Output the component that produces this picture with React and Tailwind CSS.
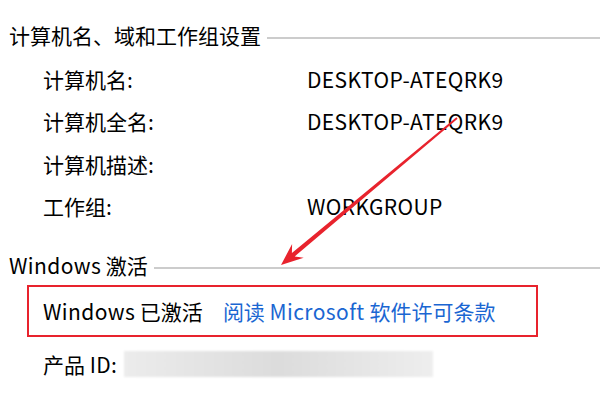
const FONT = { fontFamily: '"Noto Sans CJK SC", "Noto Sans", sans-serif' };

const FIELDS = [
  { label: "计算机名:", value: "DESKTOP-ATEQRK9" },
  { label: "计算机全名:", value: "DESKTOP-ATEQRK9" },
  { label: "计算机描述:", value: "" },
  { label: "工作组:", value: "WORKGROUP" },
];

// Latin runs are set a little wider, closer to Segoe UI
function Latin({ children }) {
  return <span className="tracking-[0.4px]">{children}</span>;
}

function GroupHeading({ children }) {
  return (
    <div className="flex h-[30px] items-center">
      <span className="shrink-0 pl-[9px] pr-[6px] leading-none">{children}</span>
      <div className="mt-[6px] h-[2px] flex-1 bg-[#cccccc]" />
    </div>
  );
}

function Arrow() {
  return (
    <svg className="pointer-events-none absolute left-0 top-0" width="600" height="400" viewBox="0 0 600 400" aria-hidden>
      <polygon
        fill="#e8232d"
        points="457.6,118.7 294.7,256.4 303.7,257.8 281,265 292.1,244 291.9,253 456.4,117.3"
      />
    </svg>
  );
}

export default function App() {
  return (
    <div className="relative h-[400px] w-[600px] overflow-hidden bg-white text-[21px] text-black" style={FONT}>
      <div className="flex flex-col pt-[20px]">
        <GroupHeading>计算机名、域和工作组设置</GroupHeading>

        <div className="mt-[8px] flex flex-col">
          {FIELDS.map((f) => (
            <div key={f.label} className="flex h-[42.5px] items-center leading-none">
              <span className="w-[307px] shrink-0 pl-[43px]">{f.label}</span>
              <Latin>{f.value}</Latin>
            </div>
          ))}
        </div>

        <div className="mt-[22px]">
          <GroupHeading>
            <Latin>Windows</Latin> 激活
          </GroupHeading>
        </div>

        <div className="ml-[27px] mt-[5px] flex h-[52px] w-[511px] items-center border-2 border-[#e8232d] pl-[14px] leading-none">
          <span>
            <Latin>Windows</Latin> 已激活
          </span>
          <a className="ml-[20px] text-[#1a66d2]">
            阅读 <Latin>Microsoft</Latin> 软件许可条款
          </a>
        </div>

        <div className="mt-[12px] flex h-[30px] items-center leading-none">
          <span className="shrink-0 pl-[43px]">
            产品 <Latin>ID:</Latin>
          </span>
          <div className="ml-[7px] h-[26px] w-[309px] bg-linear-to-r from-[#ececec] via-[#dcdcdc] to-[#eeeeee] blur-[1px]" />
        </div>
      </div>
      <Arrow />
    </div>
  );
}
